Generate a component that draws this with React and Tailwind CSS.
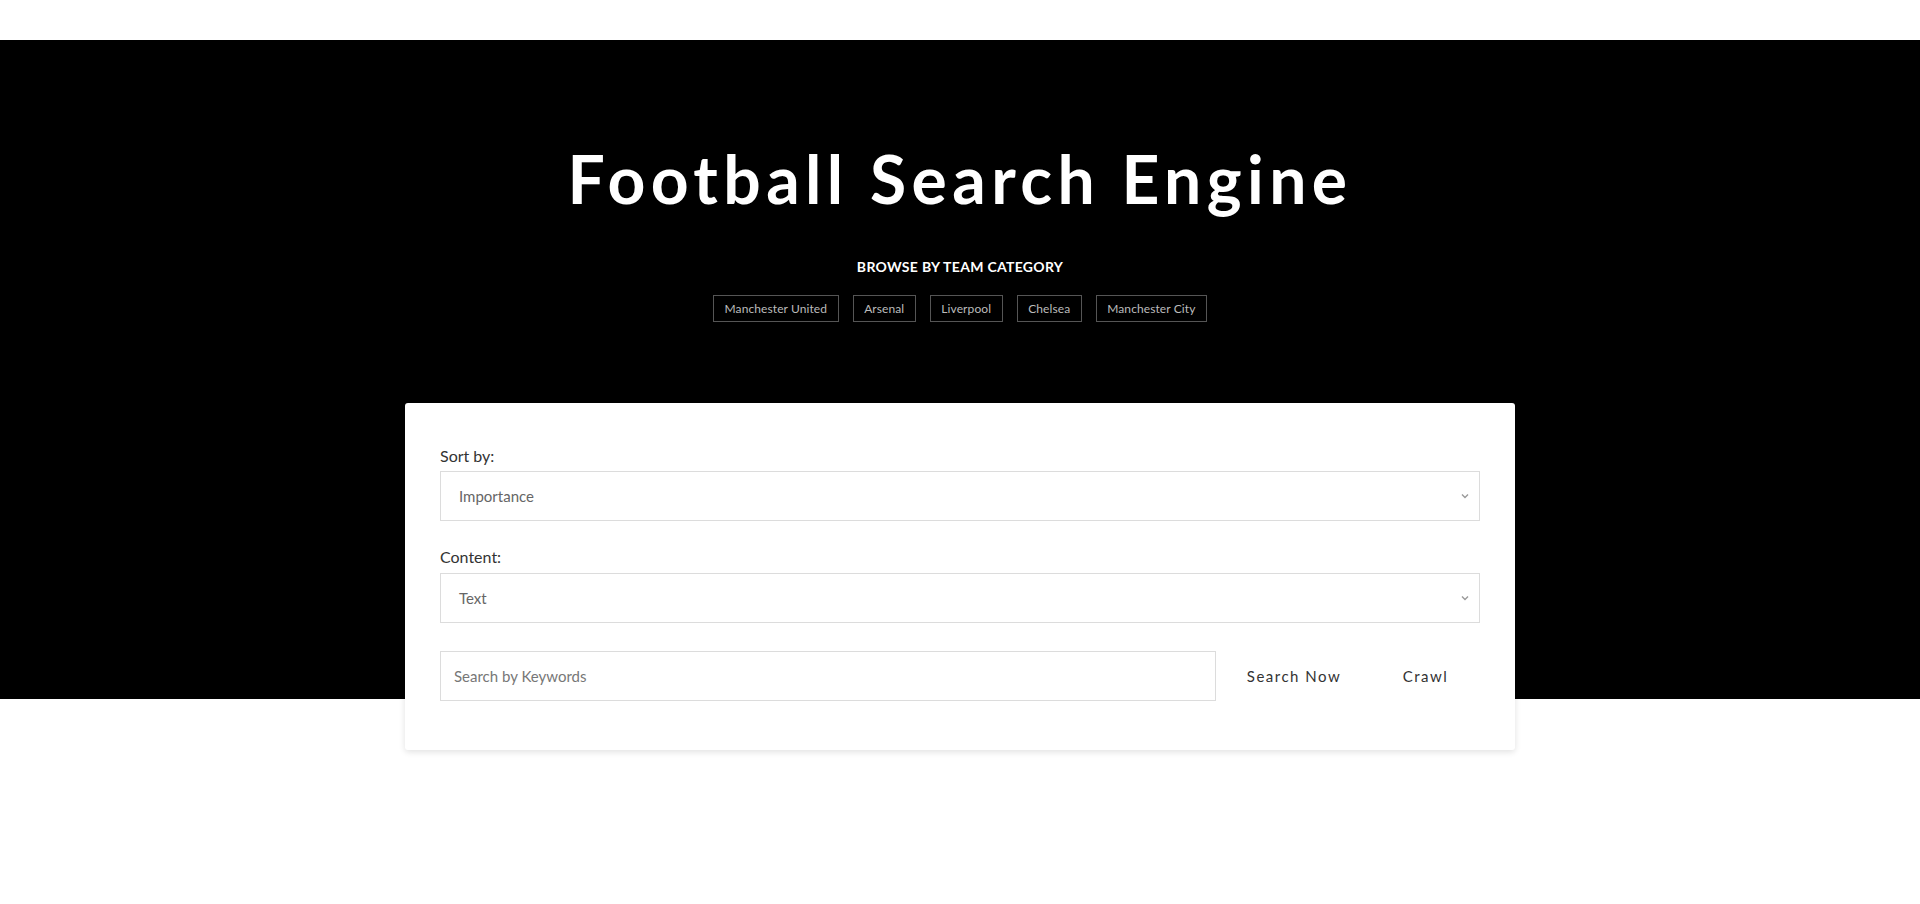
import React from "react";

const teams = ["Manchester United", "Arsenal", "Liverpool", "Chelsea", "Manchester City"];

function Chevron() {
  return (
    <svg width="8" height="6" viewBox="0 0 8 6" fill="none">
      <path d="M1 1.5L4 4.5L7 1.5" stroke="#9a9a9a" strokeWidth="1.4" />
    </svg>
  );
}

function FakeSelect({ value }) {
  return (
    <div className="flex h-[50px] w-full items-center justify-between border border-[#dcdcdc] bg-white pl-[18px] pr-[10px]">
      <span className="text-[15px] text-[#666]">{value}</span>
      <Chevron />
    </div>
  );
}

export default function App() {
  return (
    <div className="min-h-[904px] bg-white font-['Lato',sans-serif]">
      <div className="h-[40px] bg-white" />
      <div className="bg-black pt-[99px] pb-[377px]">
        <h1 className="text-center text-[66px] font-bold leading-[1.2] tracking-[5.4px] text-white">
          Football Search Engine
        </h1>
        <div className="mt-[39px] text-center text-[14px] font-bold leading-[20px] tracking-[0.3px] text-white">
          BROWSE BY TEAM CATEGORY
        </div>
        <div className="mt-[18px] flex justify-center gap-[14px]">
          {teams.map((t) => (
            <div
              key={t}
              className="flex h-[27px] items-center border border-[#555] px-[10.5px] text-[12px] tracking-[0.1px] text-[#bbb]"
            >
              {t}
            </div>
          ))}
        </div>
      </div>
      <div className="-mt-[296px] flex justify-center">
        <div className="w-[1110px] rounded-[3px] bg-white px-[35px] pt-[41px] pb-[49px] shadow-[0_2px_6px_rgba(0,0,0,0.12)]">
          <div className="text-[16px] leading-[24px] text-[#333]">Sort by:</div>
          <div className="mt-[3px]">
            <FakeSelect value="Importance" />
          </div>
          <div className="mt-[24px] text-[16px] leading-[24px] text-[#333]">Content:</div>
          <div className="mt-[4px]">
            <FakeSelect value="Text" />
          </div>
          <div className="mt-[28px] flex items-center">
            <input
              className="h-[50px] w-[776px] border border-[#dcdcdc] bg-white px-[13px] text-[15px] text-[#555] outline-none placeholder:text-[#777]"
              placeholder="Search by Keywords"
            />
            <button className="w-[156px] text-center text-[15px] tracking-[1.5px] text-[#333]">Search Now</button>
            <button className="w-[107px] text-center text-[15px] tracking-[1.5px] text-[#333]">Crawl</button>
          </div>
        </div>
      </div>
    </div>
  );
}
